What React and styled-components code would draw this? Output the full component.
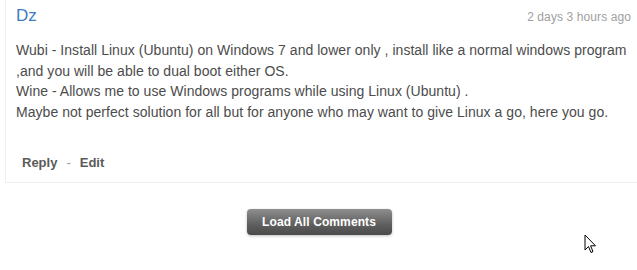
import React from "react";
import styled, { createGlobalStyle } from "styled-components";

const Global = createGlobalStyle`
  html, body { margin: 0; padding: 0; background: #fff; }
  body { width: 637px; height: 270px; overflow: hidden; font-family: "Liberation Sans", Arial, sans-serif; }
`;

const Page = styled.div`
  position: relative;
  width: 637px;
  height: 270px;
  padding-left: 5px;
  box-sizing: border-box;
`;

const Card = styled.div`
  margin-top: -2px;
  margin-right: -10px;
  border: 1px solid #f0f0f0;
  border-top: none;
  padding: 6px 10px 12px 10px;
  box-sizing: border-box;
  height: 185px;
  display: flex;
  flex-direction: column;
`;

const Header = styled.div`
  display: flex;
  justify-content: space-between;
  align-items: baseline;
  padding-right: 5px;
`;

const Author = styled.a`
  font-size: 17px;
  color: #3c7dbf;
  text-decoration: none;
  line-height: 24px;
`;

const Time = styled.span`
  font-size: 12px;
  letter-spacing: 0.1px;
  color: #a0a0a0;
`;

const Body = styled.div`
  margin-top: 12px;
  font-size: 14px;
  letter-spacing: 0.04px;
  line-height: 20.5px;
  color: #4c4c4c;
`;

const Actions = styled.div`
  margin-top: auto;
  padding-left: 6px;
  display: flex;
  align-items: center;
  gap: 9px;
  font-size: 13px;
  font-weight: bold;
  color: #5a5a5a;
`;

const Sep = styled.span`
  font-weight: normal;
  color: #999;
`;

const ButtonRow = styled.div`
  display: flex;
  justify-content: center;
  margin-top: 26px;
  padding-right: 4px;
`;

const LoadButton = styled.button`
  width: 145px;
  height: 26px;
  border: none;
  border-radius: 4px;
  background: linear-gradient(#8e8e8e, #5f5f5f 60%, #4a4a4a);
  color: #fff;
  font-family: "Liberation Sans", Arial, sans-serif;
  font-weight: bold;
  font-size: 12px;
  letter-spacing: 0.1px;
  box-shadow: 0 1px 3px rgba(0,0,0,0.25);
  padding: 0;
`;

const Cursor = styled.svg`
  position: absolute;
  left: 584px;
  top: 236px;
`;

export default function App() {
  return (
    <>
      <Global />
      <Page>
        <Card>
          <Header>
            <Author>Dz</Author>
            <Time>2 days 3 hours ago</Time>
          </Header>
          <Body>
            Wubi - Install Linux (Ubuntu) on Windows 7 and lower only , install like a normal windows program
            <br />,and you will be able to dual boot either OS.
            <br />Wine - Allows me to use Windows programs while using Linux (Ubuntu) .
            <br />Maybe not perfect solution for all but for anyone who may want to give Linux a go, here you go.
          </Body>
          <Actions>
            <span>Reply</span>
            <Sep>-</Sep>
            <span>Edit</span>
          </Actions>
        </Card>
        <ButtonRow>
          <LoadButton>Load All Comments</LoadButton>
        </ButtonRow>
        <Cursor width="14" height="21" viewBox="0 0 14 21">
          <path d="M1 1 L1 16 L4.5 12.5 L7 18.5 L9 17.6 L6.6 11.8 L11.5 11.8 Z" fill="#fff" stroke="#000" strokeWidth="1" strokeLinejoin="round" />
        </Cursor>
      </Page>
    </>
  );
}
